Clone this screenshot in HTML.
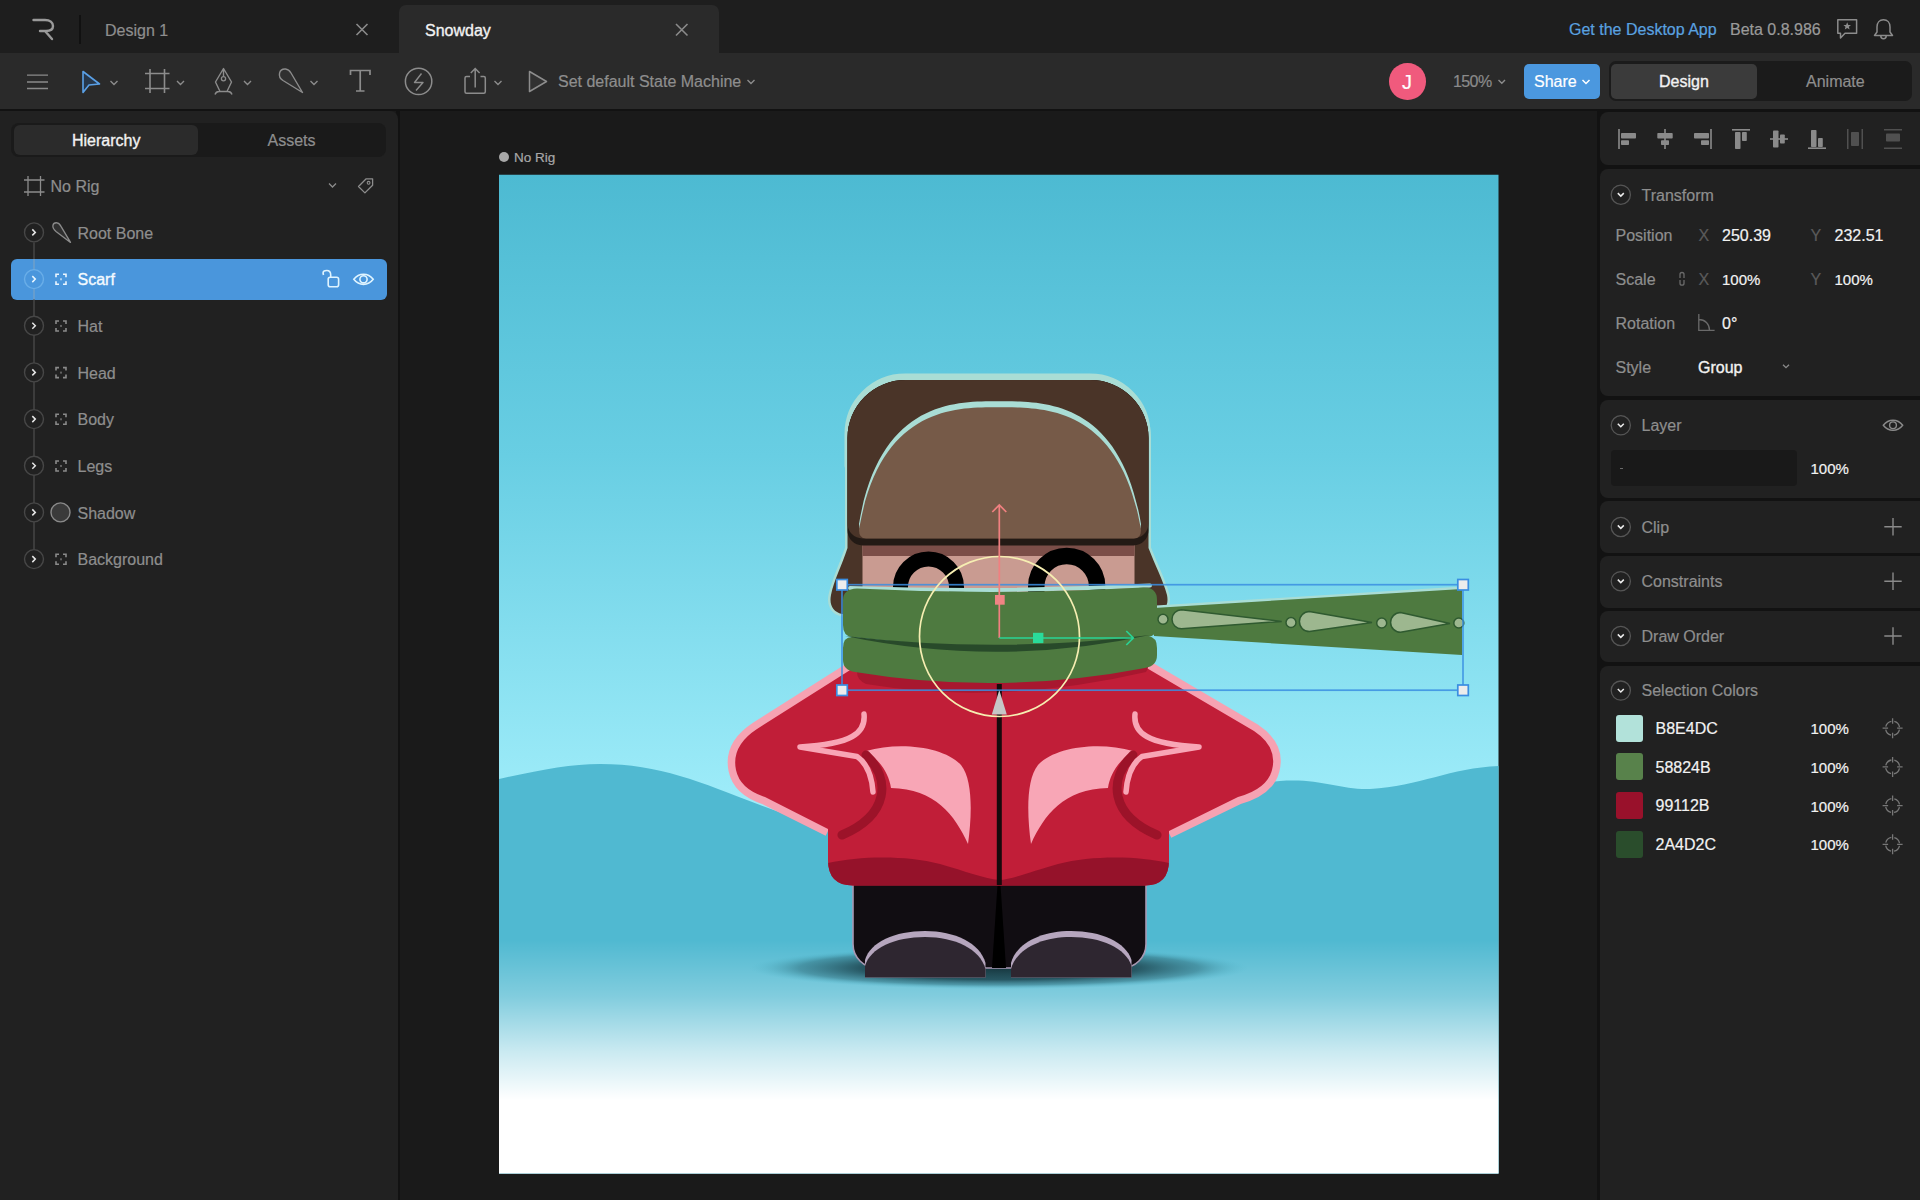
<!DOCTYPE html>
<html><head><meta charset="utf-8">
<style>
*{box-sizing:border-box;margin:0;padding:0}
html,body{width:1920px;height:1200px;overflow:hidden;background:#1a1a1a;font-family:"Liberation Sans",sans-serif}
.a{position:absolute}
.t{position:absolute;font-size:16px;line-height:20px;white-space:nowrap;color:#8e8e8e;margin-top:0.6px;-webkit-text-stroke:0.2px currentColor}
.w{color:#f2f2f2}
.m{-webkit-text-stroke:0.35px currentColor}
svg{position:absolute;overflow:visible}
</style></head><body>

<!-- TAB BAR -->
<div class="a" style="left:0;top:0;width:1920px;height:53px;background:#1e1e1e"></div>
<div class="a" style="left:399px;top:5px;width:320px;height:48px;background:#2a2a2a;border-radius:7px 7px 0 0"></div>
<svg style="left:0;top:0" width="1920" height="53">
  <path d="M33.5 20 H45 C50 20 53 22.5 53 26 C53 29.5 50 31 46 31 H40 M45 31 L52 39" fill="none" stroke="#9a9a9a" stroke-width="2.4" stroke-linecap="round" stroke-linejoin="round"/>
  <line x1="80" y1="15" x2="80" y2="44" stroke="#111" stroke-width="2"/>
  <path d="M356.5 24 L367.5 35 M367.5 24 L356.5 35" stroke="#8a8a8a" stroke-width="1.6"/>
  <path d="M676 24 L687.5 35.5 M687.5 24 L676 35.5" stroke="#8a8a8a" stroke-width="1.6"/>
</svg>
<div class="t" style="left:105px;top:20px;color:#8e8e8e">Design 1</div>
<div class="t w m" style="left:425px;top:20px">Snowday</div>
<div class="t" style="left:1569px;top:19.5px;color:#5aa2e0">Get the Desktop App</div>
<div class="t" style="left:1730px;top:19.5px;color:#9a9a9a">Beta 0.8.986</div>


<svg style="left:0;top:0" width="1920" height="53" fill="none" stroke="#8c8c8c" stroke-width="1.5">
  <path d="M1837.8 19.8 H1856.6 V33.2 H1845 L1840.5 38 V33.2 H1837.8 Z" stroke-linejoin="round"/>
  <path d="M1847.2 22.3 L1848.3 25 L1851 25.1 L1848.9 26.8 L1849.6 29.5 L1847.2 28 L1844.8 29.5 L1845.5 26.8 L1843.4 25.1 L1846.1 25 Z" fill="#8c8c8c" stroke="none"/>
  <path d="M1874.5 35.5 H1892.5 L1890 32 V27 C1890 22.5 1887.3 19.8 1883.5 19.8 C1879.7 19.8 1877 22.5 1877 27 V32 Z M1880.8 36 C1880.8 39.5 1886.2 39.5 1886.2 36" stroke-linejoin="round"/>
</svg>

<!-- TOOLBAR -->
<div class="a" style="left:0;top:53px;width:1920px;height:56px;background:#2a2a2a"></div>
<div class="a" style="left:0;top:109px;width:1920px;height:2px;background:#121212"></div>


<svg style="left:0;top:53px" width="1920" height="56" fill="none" stroke="#8c8c8c" stroke-width="1.5">
  <!-- hamburger -->
  <path d="M27 22.2 H48 M27 29 H48 M27 35.5 H48" stroke="#8a8a8a" stroke-width="1.3"/>
  <!-- select arrow -->
  <path d="M83 18.5 L99.5 31 L89 32 L83 39.5 Z" stroke="#5aa0e6" fill="#27374a" stroke-width="1.6" stroke-linejoin="round"/>
  <path d="M110.5 28 L114 31.5 L117.5 28" stroke-width="1.4"/>
  <!-- frame -->
  <path d="M150 16 V40 M164.5 16 V40 M145 20.5 H169.5 M145 35.5 H169.5" stroke-width="1.6"/>
  <path d="M177 28 L180.5 31.5 L184 28" stroke-width="1.4"/>
  <!-- pen -->
  <path d="M223.5 15.5 L215.5 29 L220 38.5 H227 L231.5 29 Z M223.5 15.5 V23.5 M215 41.5 Q216 38.5 219 38.5 H228 Q231 38.5 232 41.5" stroke-width="1.4" stroke-linejoin="round"/>
  <circle cx="223.5" cy="25.7" r="2.1" stroke-width="1.3"/>
  <path d="M244 28 L247.5 31.5 L251 28" stroke-width="1.4"/>
  <!-- bone -->
  <path d="M302.5 39.5 L283 27.5 C277 23.5 279 15.5 285.5 16 C288 16.2 289.5 17.5 291 20 Z" stroke-width="1.4" fill="#303030" stroke-linejoin="round"/>
  <path d="M310.5 28 L314 31.5 L317.5 28" stroke-width="1.4"/>
  <!-- T -->
  <path d="M350.5 22 V17.5 H370 V22 M360.2 17.5 V38 M356 38 H364.5" stroke-width="1.7"/>
  <!-- lightning circle -->
  <circle cx="418.6" cy="28.4" r="13.2" stroke-width="1.5"/>
  <path d="M421.5 20.5 L414.5 29.5 H423 L416 37.5" stroke-width="1.4" stroke-linejoin="round"/>
  <!-- export -->
  <path d="M470 23.5 H466.5 Q465 23.5 465 25 V38.8 Q465 40.3 466.5 40.3 H483.8 Q485.3 40.3 485.3 38.8 V25 Q485.3 23.5 483.8 23.5 H480.5 M475.2 34.5 V15.5 M470.8 20 L475.2 15.5 L479.6 20" stroke-width="1.5"/>
  <path d="M494.5 28 L498 31.5 L501.5 28" stroke-width="1.4"/>
  <!-- play -->
  <path d="M529.5 18.5 L546.5 28.5 L529.5 38.5 Z" stroke-width="1.5" fill="#313131" stroke-linejoin="round"/>
  <path d="M747.5 27 L751 30.5 L754.5 27" stroke-width="1.4"/>
  <!-- zoom chevron -->
  <path d="M1498.5 27 L1501.8 30.3 L1505 27" stroke-width="1.4"/>
</svg>
<div class="t" style="left:558px;top:71.3px;color:#8e8e8e">Set default State Machine</div>
<div class="a" style="left:1389px;top:63px;width:36.5px;height:36.5px;border-radius:50%;background:#f05a7d"></div>
<div class="t" style="left:1398px;top:71.5px;width:18px;text-align:center;color:#fff;font-size:20px;line-height:20px">J</div>
<div class="t" style="left:1453px;top:71.5px;letter-spacing:-0.6px;color:#8a8a8a">150%</div>
<div class="a" style="left:1524px;top:64px;width:76px;height:35px;border-radius:5px;background:#4b98df"></div>
<div class="t" style="left:1534px;top:71.5px;color:#fff">Share</div>
<svg style="left:0;top:53px" width="1920" height="56" fill="none" stroke="#fff" stroke-width="1.5">
  <path d="M1582.5 27 L1586 30.5 L1589.5 27"/>
</svg>
<div class="a" style="left:1609px;top:61.3px;width:303px;height:39.5px;border-radius:7px;background:#1b1b1b"></div>
<div class="a" style="left:1611px;top:64px;width:146px;height:34.7px;border-radius:5px;background:#3b3b3b"></div>
<div class="t w m" style="left:1659px;top:71.2px">Design</div>
<div class="t" style="left:1806px;top:71.2px;color:#8e8e8e">Animate</div>


<!-- LEFT PANEL -->
<div class="a" style="left:396px;top:111px;width:4px;height:1089px;background:#121212"></div>
<div class="a" style="left:0;top:111px;width:397.5px;height:1089px;background:#212121;border-radius:0 8px 0 0"></div>
<div class="a" style="left:11px;top:123px;width:375px;height:34px;border-radius:8px;background:#1a1a1a"></div>
<div class="a" style="left:13.5px;top:125.3px;width:184.7px;height:29.7px;border-radius:6px;background:#2b2b2b"></div>
<div class="t w m" style="left:72px;top:130.6px">Hierarchy</div>
<div class="t" style="left:267.5px;top:130.6px;color:#8e8e8e">Assets</div>
<div class="a" style="left:11px;top:258.6px;width:375.7px;height:41.2px;border-radius:6px;background:#4a96dc"></div>
<svg style="left:0;top:0" width="400" height="600" fill="none" stroke="#8c8c8c" stroke-width="1.4">
  <!-- no rig frame icon -->
  <path d="M28 176 V196 M40.5 176 V196 M24 180 H44.5 M24 192 H44.5" stroke-width="1.3"/>
  <path d="M329 183.5 L332.5 187 L336 183.5" stroke-width="1.3"/>
  <path d="M358.5 186.5 L366.2 178.8 H372.6 V185.2 L364.9 192.9 Z" stroke-width="1.3" stroke-linejoin="round"/>
  <circle cx="368.6" cy="182.8" r="1.4" stroke-width="1.1"/>
  <!-- tree line -->
  <path d="M34 242.4 V549" stroke="#444" stroke-width="1.6"/><path d="M34 259 V299.5" stroke="#6fb0ea" stroke-width="1.6"/>
  <circle cx="34" cy="232.4" r="9.5" fill="#212121" stroke="#474747" stroke-width="1.4"/><path d="M32.3 229.4 L35.3 232.4 L32.3 235.4" stroke="#e6e6e6" stroke-width="1.5"/><path d="M70.5 242.4 L56 231.4 C51 227.4 52.5 222.4 57 222.8 C59 223.0 60 224.4 61 226.4 Z" fill="#303030" stroke-linejoin="round" stroke-width="1.3"/><circle cx="34" cy="279.1" r="9.5" fill="#4a96dc" stroke="#6aaee8" stroke-width="1.4"/><path d="M32.3 276.1 L35.3 279.1 L32.3 282.1" stroke="#e8f6ff" stroke-width="1.5"/><path d="M56 277.27 V274.27 H59 M63 274.27 H66 V277.27 M66 281.27 V284.27 H63 M59 284.27 H56 V281.27" stroke="#eaf6ff" stroke-width="1.6"/><rect x="60" y="278.27" width="2" height="2" fill="#eaf6ff" stroke="none" opacity="0.6"/><circle cx="34" cy="325.7" r="9.5" fill="#212121" stroke="#474747" stroke-width="1.4"/><path d="M32.3 322.7 L35.3 325.7 L32.3 328.7" stroke="#e6e6e6" stroke-width="1.5"/><path d="M56 323.94 V320.94 H59 M63 320.94 H66 V323.94 M66 327.94 V330.94 H63 M59 330.94 H56 V327.94" stroke="#8a8a8a" stroke-width="1.6"/><rect x="60" y="324.94" width="2" height="2" fill="#8a8a8a" stroke="none" opacity="0.6"/><circle cx="34" cy="372.4" r="9.5" fill="#212121" stroke="#474747" stroke-width="1.4"/><path d="M32.3 369.4 L35.3 372.4 L32.3 375.4" stroke="#e6e6e6" stroke-width="1.5"/><path d="M56 370.60999999999996 V367.60999999999996 H59 M63 367.60999999999996 H66 V370.60999999999996 M66 374.60999999999996 V377.60999999999996 H63 M59 377.60999999999996 H56 V374.60999999999996" stroke="#8a8a8a" stroke-width="1.6"/><rect x="60" y="371.60999999999996" width="2" height="2" fill="#8a8a8a" stroke="none" opacity="0.6"/><circle cx="34" cy="419.1" r="9.5" fill="#212121" stroke="#474747" stroke-width="1.4"/><path d="M32.3 416.1 L35.3 419.1 L32.3 422.1" stroke="#e6e6e6" stroke-width="1.5"/><path d="M56 417.28000000000003 V414.28000000000003 H59 M63 414.28000000000003 H66 V417.28000000000003 M66 421.28000000000003 V424.28000000000003 H63 M59 424.28000000000003 H56 V421.28000000000003" stroke="#8a8a8a" stroke-width="1.6"/><rect x="60" y="418.28000000000003" width="2" height="2" fill="#8a8a8a" stroke="none" opacity="0.6"/><circle cx="34" cy="465.8" r="9.5" fill="#212121" stroke="#474747" stroke-width="1.4"/><path d="M32.3 462.8 L35.3 465.8 L32.3 468.8" stroke="#e6e6e6" stroke-width="1.5"/><path d="M56 463.95 V460.95 H59 M63 460.95 H66 V463.95 M66 467.95 V470.95 H63 M59 470.95 H56 V467.95" stroke="#8a8a8a" stroke-width="1.6"/><rect x="60" y="464.95" width="2" height="2" fill="#8a8a8a" stroke="none" opacity="0.6"/><circle cx="34" cy="512.4" r="9.5" fill="#212121" stroke="#474747" stroke-width="1.4"/><path d="M32.3 509.4 L35.3 512.4 L32.3 515.4" stroke="#e6e6e6" stroke-width="1.5"/><circle cx="60.5" cy="512.4" r="9.5" fill="#3a3a3a" stroke="#8a8a8a" stroke-width="1.4"/><circle cx="34" cy="559.1" r="9.5" fill="#212121" stroke="#474747" stroke-width="1.4"/><path d="M32.3 556.1 L35.3 559.1 L32.3 562.1" stroke="#e6e6e6" stroke-width="1.5"/><path d="M56 557.2900000000001 V554.2900000000001 H59 M63 554.2900000000001 H66 V557.2900000000001 M66 561.2900000000001 V564.2900000000001 H63 M59 564.2900000000001 H56 V561.2900000000001" stroke="#8a8a8a" stroke-width="1.6"/><rect x="60" y="558.2900000000001" width="2" height="2" fill="#8a8a8a" stroke="none" opacity="0.6"/>
</svg>
<div class="t" style="left:50.5px;top:176.5px;color:#8e8e8e">No Rig</div>
<div class="t" style="left:77.5px;top:223.1px;color:#8e8e8e">Root Bone</div>
<div class="t w m" style="left:77.5px;top:269.8px;color:#f4faff">Scarf</div>
<div class="t" style="left:77.5px;top:316.4px;color:#8e8e8e">Hat</div>
<div class="t" style="left:77.5px;top:363.1px;color:#8e8e8e">Head</div>
<div class="t" style="left:77.5px;top:409.8px;color:#8e8e8e">Body</div>
<div class="t" style="left:77.5px;top:456.4px;color:#8e8e8e">Legs</div>
<div class="t" style="left:77.5px;top:503.1px;color:#8e8e8e">Shadow</div>
<div class="t" style="left:77.5px;top:549.8px;color:#8e8e8e">Background</div>
<svg style="left:0;top:0" width="400" height="600" fill="none" stroke="#dff4ff" stroke-width="1.6">
  <path d="M323.5 275 C322 270.5 325 270.5 326.8 270.5 C329.5 270.5 330.7 272.5 330.7 275 V277.5"/>
  <rect x="328.2" y="277.2" width="10.4" height="9.5" rx="2"/>
  <path d="M353.8 279.3 C359 272.5 368 272.5 373.2 279.3 C368 286.1 359 286.1 353.8 279.3 Z"/>
  <circle cx="363.5" cy="279.3" r="3.6"/>
</svg>


<!-- RIGHT PANEL -->
<div class="a" style="left:1597px;top:111px;width:323px;height:1089px;background:#121212"></div>
<div class="a" style="left:1600px;top:112px;width:320px;height:53px;background:#212121;border-radius:8px 0 0 8px"></div>
<div class="a" style="left:1600px;top:169px;width:320px;height:227px;background:#212121;border-radius:8px 0 0 8px"></div>
<div class="a" style="left:1600px;top:399.5px;width:320px;height:98px;background:#212121;border-radius:8px 0 0 8px"></div>
<div class="a" style="left:1600px;top:501px;width:320px;height:52px;background:#212121;border-radius:8px 0 0 8px"></div>
<div class="a" style="left:1600px;top:555.5px;width:320px;height:52px;background:#212121;border-radius:8px 0 0 8px"></div>
<div class="a" style="left:1600px;top:610.5px;width:320px;height:51.5px;background:#212121;border-radius:8px 0 0 8px"></div>
<div class="a" style="left:1600px;top:665.5px;width:320px;height:540px;background:#212121;border-radius:8px 0 0 0"></div>
<svg style="left:0;top:0" width="1920" height="1200" fill="#8a8a8a" stroke="none">
  <!-- align icons -->
  <rect x="1618.2" y="129" width="1.6" height="20"/><rect x="1621" y="133" width="15" height="5.5" rx="0.8"/><rect x="1621" y="140.3" width="8" height="4.8" rx="0.8"/>
  <rect x="1664.2" y="129" width="1.6" height="20"/><rect x="1657.3" y="133" width="15.4" height="5.5" rx="0.8"/><rect x="1661" y="140.3" width="8" height="4.8" rx="0.8"/>
  <rect x="1710.2" y="129" width="1.6" height="20"/><rect x="1694" y="133" width="15" height="5.5" rx="0.8"/><rect x="1701" y="140.3" width="8" height="4.8" rx="0.8"/>
  <rect x="1732" y="129" width="18" height="1.6"/><rect x="1735" y="132" width="5.5" height="17" rx="0.8"/><rect x="1742" y="132" width="4.8" height="9" rx="0.8"/>
  <rect x="1770" y="138.2" width="18" height="1.6"/><rect x="1773" y="130.5" width="5.5" height="17" rx="0.8"/><rect x="1780" y="134.5" width="4.8" height="9" rx="0.8"/>
  <rect x="1808" y="147.4" width="18" height="1.6"/><rect x="1811" y="130" width="5.5" height="17" rx="0.8"/><rect x="1818" y="138" width="4.8" height="9" rx="0.8"/>
  <g opacity="0.45"><rect x="1847" y="129" width="1.5" height="20"/><rect x="1861.5" y="129" width="1.5" height="20"/><rect x="1851" y="132" width="8" height="14" rx="0.8"/></g>
  <g opacity="0.45"><rect x="1884" y="129" width="18" height="1.5"/><rect x="1884" y="147.5" width="18" height="1.5"/><rect x="1886" y="133.5" width="14" height="8" rx="0.8"/></g>
</svg>
<svg style="left:0;top:0" width="1920" height="1200" fill="none" stroke="#5c5c5c" stroke-width="1.3">
  <circle cx="1620.8" cy="194.7" r="9.6" stroke="#555"/><path d="M1617.8 193.1 L1620.8 196.1 L1623.8 193.1" stroke="#eee" stroke-width="1.5"/><circle cx="1620.8" cy="425.3" r="9.6" stroke="#555"/><path d="M1617.8 423.7 L1620.8 426.7 L1623.8 423.7" stroke="#eee" stroke-width="1.5"/><circle cx="1620.8" cy="527" r="9.6" stroke="#555"/><path d="M1617.8 525.4 L1620.8 528.4 L1623.8 525.4" stroke="#eee" stroke-width="1.5"/><circle cx="1620.8" cy="581.2" r="9.6" stroke="#555"/><path d="M1617.8 579.6 L1620.8 582.6 L1623.8 579.6" stroke="#eee" stroke-width="1.5"/><circle cx="1620.8" cy="636" r="9.6" stroke="#555"/><path d="M1617.8 634.4 L1620.8 637.4 L1623.8 634.4" stroke="#eee" stroke-width="1.5"/><circle cx="1620.8" cy="690.6" r="9.6" stroke="#555"/><path d="M1617.8 689.0 L1620.8 692.0 L1623.8 689.0" stroke="#eee" stroke-width="1.5"/>
  <!-- link icon -->
  <path d="M1680 278 V274.5 Q1680 272.5 1682 272.5 Q1684 272.5 1684 274.5 V278 M1680 280 V283.2 Q1680 285.2 1682 285.2 Q1684 285.2 1684 283.2 V280" stroke="#6a6a6a" stroke-width="1.3"/>
  <!-- rotation icon -->
  <path d="M1698.8 314 V330.3 H1714.6 M1698.8 319.5 C1705 319.5 1709.5 324 1709.5 330.3" stroke="#6a6a6a" stroke-width="1.3"/>
  <path d="M1783 364.7 L1786 367.7 L1789 364.7" stroke="#8a8a8a" stroke-width="1.3"/>
  <!-- layer eye -->
  <path d="M1883.3 425.3 C1888.5 418.5 1897.5 418.5 1902.7 425.3 C1897.5 432.1 1888.5 432.1 1883.3 425.3 Z" stroke="#8a8a8a" stroke-width="1.4"/>
  <circle cx="1893" cy="425.3" r="3.4" stroke="#8a8a8a" stroke-width="1.4"/>
  <!-- plus icons -->
  <path d="M1893 518 V535.5 M1884.3 526.8 H1901.7 M1893 572.5 V590 M1884.3 581.2 H1901.7 M1893 627.3 V644.8 M1884.3 636 H1901.7" stroke="#8a8a8a" stroke-width="1.4"/>
</svg>
<div class="a" style="left:1611px;top:450px;width:185.7px;height:35.8px;border-radius:4px;background:#191919"></div>
<div class="a" style="left:1619.5px;top:467.5px;width:3px;height:1.3px;background:#6a6a6a"></div>
<div class="t" style="left:1641.5px;top:185.4px;color:#8e8e8e;">Transform</div>
<div class="t" style="left:1615.5px;top:225.3px;color:#8e8e8e;">Position</div>
<div class="t" style="left:1698.5px;top:225.3px;color:#5a5a5a;">X</div>
<div class="t" style="left:1722px;top:225.3px;color:#f2f2f2;">250.39</div>
<div class="t" style="left:1810.5px;top:225.3px;color:#5a5a5a;">Y</div>
<div class="t" style="left:1834.5px;top:225.3px;color:#f2f2f2;">232.51</div>
<div class="t" style="left:1615.5px;top:269.2px;color:#8e8e8e;">Scale</div>
<div class="t" style="left:1698.5px;top:269.2px;color:#5a5a5a;">X</div>
<div class="t" style="left:1722px;top:269.2px;color:#f2f2f2;font-size:15px">100%</div>
<div class="t" style="left:1810.5px;top:269.2px;color:#5a5a5a;">Y</div>
<div class="t" style="left:1834.5px;top:269.2px;color:#f2f2f2;font-size:15px">100%</div>
<div class="t" style="left:1615.5px;top:313.5px;color:#8e8e8e;">Rotation</div>
<div class="t" style="left:1722px;top:313.5px;color:#f2f2f2;">0°</div>
<div class="t" style="left:1615.5px;top:357px;color:#8e8e8e;">Style</div>
<div class="t m" style="left:1698px;top:357px;color:#f2f2f2;">Group</div>
<div class="t" style="left:1641.5px;top:415.5px;color:#8e8e8e;">Layer</div>
<div class="t" style="left:1810.5px;top:458.8px;color:#f2f2f2;font-size:15px">100%</div>
<div class="t" style="left:1641.5px;top:517.3px;color:#8e8e8e;">Clip</div>
<div class="t" style="left:1641.5px;top:571.5px;color:#8e8e8e;">Constraints</div>
<div class="t" style="left:1641.5px;top:626.3px;color:#8e8e8e;">Draw Order</div>
<div class="t" style="left:1641.5px;top:680.9px;color:#8e8e8e;">Selection Colors</div>
<div class="a" style="left:1616px;top:714.7px;width:27px;height:27px;border-radius:3px;background:#b2e2da"></div>
<div class="t" style="left:1655.5px;top:718.4000000000001px;color:#f2f2f2;">B8E4DC</div>
<div class="t" style="left:1810.5px;top:718.6px;color:#f2f2f2;font-size:15px">100%</div>
<div class="a" style="left:1616px;top:753.4px;width:27px;height:27px;border-radius:3px;background:#58824b"></div>
<div class="t" style="left:1655.5px;top:757.1000000000001px;color:#f2f2f2;">58824B</div>
<div class="t" style="left:1810.5px;top:757.3000000000001px;color:#f2f2f2;font-size:15px">100%</div>
<div class="a" style="left:1616px;top:792.1px;width:27px;height:27px;border-radius:3px;background:#99112b"></div>
<div class="t" style="left:1655.5px;top:795.8000000000001px;color:#f2f2f2;">99112B</div>
<div class="t" style="left:1810.5px;top:796.0px;color:#f2f2f2;font-size:15px">100%</div>
<div class="a" style="left:1616px;top:830.8px;width:27px;height:27px;border-radius:3px;background:#2a4d2c"></div>
<div class="t" style="left:1655.5px;top:834.5000000000001px;color:#f2f2f2;">2A4D2C</div>
<div class="t" style="left:1810.5px;top:834.7px;color:#f2f2f2;font-size:15px">100%</div>
<svg style="left:0;top:0" width="1920" height="1200" fill="none" stroke="#777" stroke-width="1.3"><path d="M1892.6 718.2 V723.7 M1892.6 732.7 V738.2 M1882.6 728.2 H1888.1 M1897.1 728.2 H1902.6"/><circle cx="1892.6" cy="728.2" r="7" stroke-dasharray="8 3" stroke-dashoffset="9.5"/><path d="M1892.6 756.9 V762.4 M1892.6 771.4 V776.9 M1882.6 766.9 H1888.1 M1897.1 766.9 H1902.6"/><circle cx="1892.6" cy="766.9000000000001" r="7" stroke-dasharray="8 3" stroke-dashoffset="9.5"/><path d="M1892.6 795.6 V801.1 M1892.6 810.1 V815.6 M1882.6 805.6 H1888.1 M1897.1 805.6 H1902.6"/><circle cx="1892.6" cy="805.6" r="7" stroke-dasharray="8 3" stroke-dashoffset="9.5"/><path d="M1892.6 834.3 V839.8 M1892.6 848.8 V854.3 M1882.6 844.3 H1888.1 M1897.1 844.3 H1902.6"/><circle cx="1892.6" cy="844.3000000000001" r="7" stroke-dasharray="8 3" stroke-dashoffset="9.5"/></svg>

<!-- CANVAS -->
<div class="a" style="left:499px;top:151.5px;width:10px;height:10px;border-radius:50%;background:#a8a8a8"></div>
<div class="t" style="left:514px;top:149.4px;font-size:13.5px;line-height:16px;color:#a8a8a8">No Rig</div>
<svg style="left:0;top:0" width="1920" height="1200">
<defs>
  <linearGradient id="sky" x1="0" y1="174" x2="0" y2="800" gradientUnits="userSpaceOnUse">
    <stop offset="0" stop-color="#4dbad2"/>
    <stop offset="0.45" stop-color="#68cee3"/>
    <stop offset="1" stop-color="#9eecf9"/>
  </linearGradient>
  <linearGradient id="ground" x1="0" y1="940" x2="0" y2="1100" gradientUnits="userSpaceOnUse">
    <stop offset="0" stop-color="#ffffff" stop-opacity="0"/>
    <stop offset="0.35" stop-color="#ffffff" stop-opacity="0.28"/>
    <stop offset="0.7" stop-color="#ffffff" stop-opacity="0.7"/>
    <stop offset="1" stop-color="#ffffff" stop-opacity="1"/>
  </linearGradient>
  <radialGradient id="shadow" cx="999" cy="968" r="250" gradientUnits="userSpaceOnUse" gradientTransform="translate(0 968) scale(1 0.085) translate(0 -968)">
    <stop offset="0" stop-color="#173840" stop-opacity="1"/>
    <stop offset="0.55" stop-color="#1f4a55" stop-opacity="0.9"/>
    <stop offset="0.8" stop-color="#2e6f7e" stop-opacity="0.55"/>
    <stop offset="1" stop-color="#4ebad0" stop-opacity="0"/>
  </radialGradient>
  <clipPath id="ab"><rect x="499" y="174.5" width="999.5" height="999"/></clipPath>
</defs>
<g clip-path="url(#ab)">
  <rect x="499" y="174.5" width="1000" height="1000" fill="url(#sky)"/>
  <path d="M499 779 C540 770 570 764 600 764 C660 764 700 782 760 805 C850 840 950 850 1050 830 C1150 810 1200 790 1280 781 C1320 778 1340 790 1370 789 C1420 786 1450 768 1499 766 V1175 H499 Z" fill="#50b9d1"/>
  <rect x="499" y="930" width="1000" height="245" fill="url(#ground)"/>
  <ellipse cx="999" cy="968" rx="250" ry="22" fill="url(#shadow)"/>

  <!-- PANTS -->
  <rect x="853" y="860" width="293" height="108" rx="24" fill="#110d12" stroke="#a898b2" stroke-width="1.6"/>
  <path d="M997.5 885 L1000.5 885 L1006 968 L992 968 Z" fill="#000"/>
  <!-- SHOES -->
  <path d="M865 977.5 V960 C870 942 895 931 925 931 C955 931 980 943 985.5 963 V977.5 Z" fill="#b6a6be"/>
  <path d="M865 977.5 V966 C870 948 895 937 925 937 C955 937 980 949 985.5 969 V977.5 Z" fill="#2e2630"/>
  <path d="M1011 977.5 V963 C1016.5 943 1041 931 1071 931 C1101 931 1126 942 1131.5 960 V977.5 Z" fill="#b6a6be"/>
  <path d="M1011 977.5 V969 C1016.5 949 1041 937 1071 937 C1101 937 1126 948 1131.5 966 V977.5 Z" fill="#2e2630"/>
  <!-- ARM OUTLINES -->
  <path d="M866 660 L757 729 Q731 746 736 770 Q740 789 765 797 L829 829" fill="none" stroke="#f6a2b2" stroke-width="15" stroke-linejoin="round"/>
  <path d="M1133 660 L1254 731 Q1278 747 1272 770 Q1267 789 1238 797 L1168 831" fill="none" stroke="#f6a2b2" stroke-width="15" stroke-linejoin="round"/>
  <!-- JACKET -->
  <path d="M999 655 L866 660 L757 729 Q731 746 736 770 Q740 789 765 797 L828 829 V860 Q828 885.5 853 885.5 H1145 Q1169 885.5 1169 860 V831 L1238 797 Q1267 789 1272 770 Q1278 747 1254 731 L1133 660 Z" fill="#c11e38"/>
  <path d="M828 863 C860 856 905 855 940 864 C965 871 985 879 999 880 C1013 879 1033 871 1058 864 C1093 855 1138 856 1169 863 V860 Q1169 885.5 1145 885.5 H853 Q828 885.5 828 860 Z" fill="#95122a"/>
  <g id="hand">
    <path d="M866 751 C900 741 945 747 961 765 C973 780 972 815 968 844 C955 815 935 789 891 788 C889 774 880 760 866 751 Z" fill="#f8a6b6"/>
    <path d="M866 755 C891 779 889 815 842 835" fill="none" stroke="#9c1329" stroke-width="9" stroke-linecap="round"/>
    <path d="M864 714 C866 733 852 744 800 747 L857 756.5 C868 764 872 778 873 792" fill="none" stroke="#f8a6b6" stroke-width="5.5" stroke-linecap="round" stroke-linejoin="round"/>
  </g>
  <g transform="translate(1999 0) scale(-1 1)">
    <path d="M866 751 C900 741 945 747 961 765 C973 780 972 815 968 844 C955 815 935 789 891 788 C889 774 880 760 866 751 Z" fill="#f8a6b6"/>
    <path d="M866 755 C891 779 889 815 842 835" fill="none" stroke="#9c1329" stroke-width="9" stroke-linecap="round"/>
    <path d="M864 714 C866 733 852 744 800 747 L857 756.5 C868 764 872 778 873 792" fill="none" stroke="#f8a6b6" stroke-width="5.5" stroke-linecap="round" stroke-linejoin="round"/>
  </g>
  <!-- scarf shadow on jacket -->
  <path d="M860 664 Q999 690 1140 660 Q1152 664 1146 672 Q999 706 866 684 Q852 678 860 664 Z" fill="#a8172f"/>
  <!-- ZIPPER -->
  <path d="M999.3 684 V885" stroke="#160a0c" stroke-width="5"/>
  <path d="M999.3 690 L991.8 714.5 H1006.8 Z" fill="#c6c6c6"/>
  <!-- HEAD silhouette -->
  <path id="sil" d="M847.5 438 A58 58 0 0 1 905.5 380 H1090.5 A58 58 0 0 1 1148.5 438 V548 C1155 565 1163 580 1167 595 C1169 605 1165 612 1156 614 H842 C833 612 829 605 831 595 C834 580 842 565 847.5 548 Z" fill="#a9ddd5" stroke="#a9ddd5" stroke-width="5" stroke-linejoin="round"/>
  <path d="M847.5 438 A58 58 0 0 1 905.5 380 H1090.5 A58 58 0 0 1 1148.5 438 V470 H847.5 Z" fill="#a9ddd5" stroke="#a9ddd5" stroke-width="5" stroke-linejoin="round" transform="translate(-0.5 -4)"/>
  <path d="M847.5 438 A58 58 0 0 1 905.5 380 H1090.5 A58 58 0 0 1 1148.5 438 V548 C1155 565 1163 580 1167 595 C1169 605 1165 612 1156 614 H842 C833 612 829 605 831 595 C834 580 842 565 847.5 548 Z" fill="#4a3428"/>
  <!-- face -->
  <rect x="862.5" y="544" width="272" height="72" fill="#c99b91"/>
  <rect x="862.5" y="544" width="272" height="12" fill="#7b4e48"/>
  <!-- eyes -->
  <path d="M900.5 600 V587 A28 28 0 0 1 956.5 587 V600" fill="none" stroke="#000" stroke-width="15"/>
  <path d="M1036.3 600 V586.3 A30.4 30.4 0 0 1 1097.1 586.3 V600" fill="none" stroke="#000" stroke-width="16.5"/>
  <!-- HAT -->
  <path d="M847.5 438 A58 58 0 0 1 905.5 380 H1090.5 A58 58 0 0 1 1148.5 438 V530.5 A15 15 0 0 1 1133.5 545.5 H862.5 A15 15 0 0 1 847.5 530.5 Z" fill="#231a15"/>
  <path d="M847.5 438 A58 58 0 0 1 905.5 380 H1090.5 A58 58 0 0 1 1148.5 438 V523.5 A15 15 0 0 1 1133.5 538.5 H862.5 A15 15 0 0 1 847.5 523.5 Z" fill="#4a3428"/>
  <path id="dome" d="M866 538.5 Q859 538.5 859 530 C880 404 959 407.3 1000 407.3 C1041 407.3 1120 404 1141 530 Q1141 538.5 1134 538.5 Z" fill="#a9ddd5" transform="translate(0 -6)"/>
  <path d="M866 538.5 Q859 538.5 859 530 C880 404 959 407.3 1000 407.3 C1041 407.3 1120 404 1141 530 Q1141 538.5 1134 538.5 Z" fill="#765a48"/>
  <!-- SCARF -->
  <path d="M1156 607 L1462 588" stroke="#a9ddd5" stroke-width="3"/>
  <path d="M1154 608 L1462 589 V655 L1154 636 Z" fill="#4e7a40"/>
  <g fill="#9db78f" stroke="#2f5a30" stroke-width="1.5">
    <circle cx="1163" cy="619.2" r="5"/>
    <path d="M1281.7 621.4 L1181.5 609.8 A9.5 9.5 0 0 0 1181.5 628.8 Z"/>
    <circle cx="1291" cy="622.5" r="5"/>
    <path d="M1372 622.6 L1309.4 611.6 A10 10 0 0 0 1309.4 631.6 Z"/>
    <circle cx="1381.7" cy="623" r="5"/>
    <path d="M1450 623.6 L1400.5 612.5 A9.9 9.9 0 0 0 1400.5 632.3 Z"/>
    <circle cx="1458.8" cy="623" r="5"/>
  </g>
  <path d="M850 588 Q999 593 1150 585.5" fill="none" stroke="#a9ddd5" stroke-width="4" stroke-linecap="round"/>
  <path d="M852 637 Q999 660 1148 636 Q1157 637 1157 648 V655 Q1157 666 1145 668 Q999 696 855 672 Q843 670 843 660 V648 Q843 637 852 637 Z" fill="#4e7a40"/>
  <path d="M857 588.5 Q999 596 1143 587.5 Q1157 587 1157 600 V625 Q1157 636 1148 637 Q999 655 852 637 Q843 636 843 625 V600 Q843 589 857 588.5 Z" fill="#4e7a40"/>
  <path d="M845 636 Q999 668 1150 635 Q999 654 845 636 Z" fill="#284a2a"/>
</g>
</svg>

<svg style="left:0;top:0" width="1920" height="1200" fill="none">
  <rect x="842" y="584.7" width="621" height="105.5" stroke="#3a8ee2" stroke-opacity="0.85" stroke-width="1.7"/>
  <g fill="#ececec" stroke="#3a8ee2" stroke-width="1.7">
    <rect x="836.8" y="579.5" width="10.5" height="10.5"/>
    <rect x="1457.8" y="579.5" width="10.5" height="10.5"/>
    <rect x="836.8" y="685" width="10.5" height="10.5"/>
    <rect x="1457.8" y="685" width="10.5" height="10.5"/>
  </g>
  <circle cx="999.5" cy="636.5" r="80" stroke="#f6eeb2" stroke-width="1.7"/>
  <path d="M999.3 638 V505 M992.3 512 L999.3 505 L1006.3 512" stroke="#f08080" stroke-width="1.7"/>
  <path d="M999.3 638 H1133.3 M1126.3 631 L1133.3 638 L1126.3 645" stroke="#2ad394" stroke-width="1.7"/>
  <rect x="995" y="595" width="9.7" height="9.7" fill="#f08484"/>
  <rect x="1033" y="632.8" width="10.4" height="10.3" fill="#2adb9a"/>
</svg>


</body></html>
